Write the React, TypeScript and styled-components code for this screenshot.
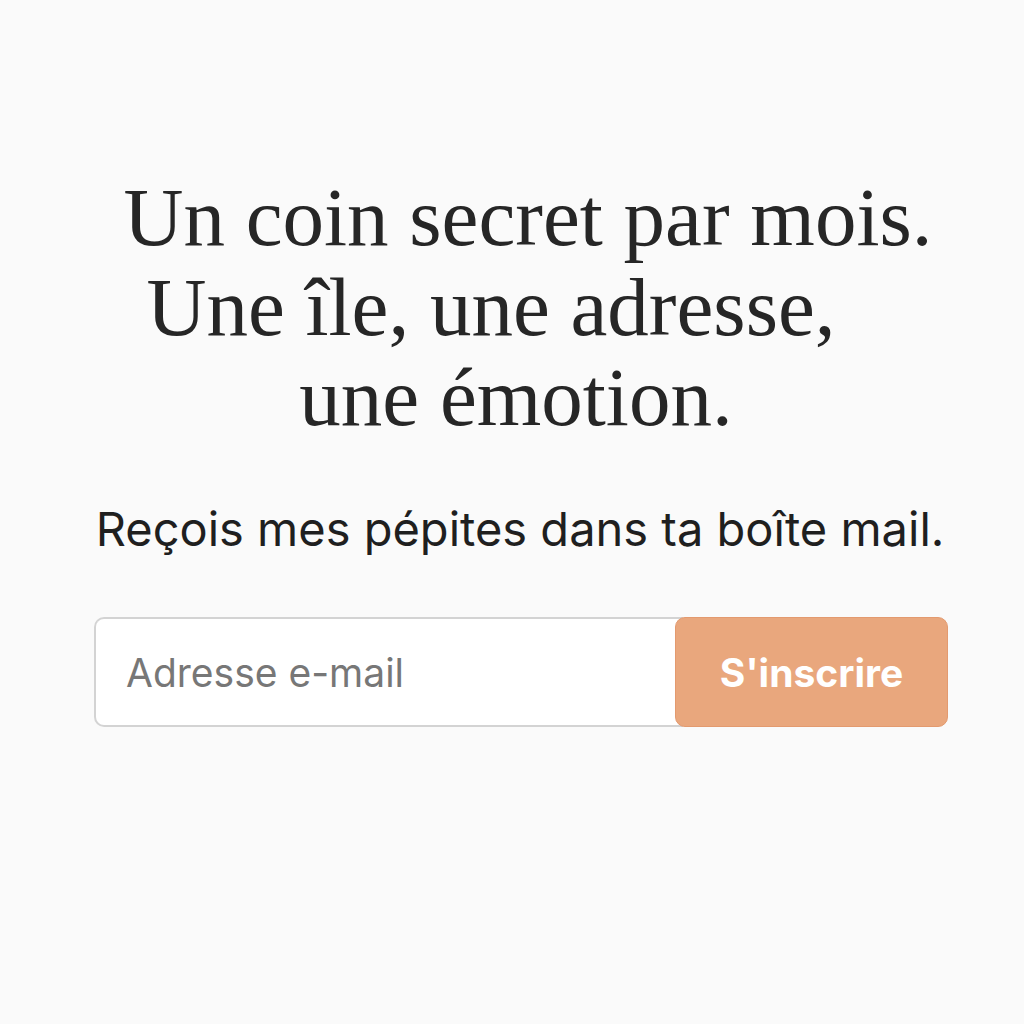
import React from "react";
import styled, { createGlobalStyle } from "styled-components";

const Global = createGlobalStyle`
  html, body { margin: 0; padding: 0; background: #fafafa; }
  body { font-family: Inter, "Liberation Sans", sans-serif; }
`;

const Page = styled.main`
  width: 1024px;
  height: 1024px;
  display: flex;
  flex-direction: column;
  align-items: center;
  padding-top: 172px;
  box-sizing: border-box;
`;

const Title = styled.h1`
  margin: 0;
  font-family: "Liberation Serif", "DejaVu Serif", serif;
  font-weight: 400;
  font-size: 83px;
  line-height: 90px;
  color: #262626;
  display: flex;
  flex-direction: column;
  align-items: center;
`;

const Line = styled.span<{ $shift: number }>`
  display: block;
  white-space: nowrap;
  margin-left: ${(p) => p.$shift}px;
`;

const Subtitle = styled.p`
  margin: 59px 0 0;
  font-family: Inter, "Liberation Sans", sans-serif;
  font-size: 47px;
  line-height: 56px;
  color: #1f1f1f;
  margin-left: 16px;
`;

const Form = styled.form`
  margin-top: 60px;
  width: 854px;
  height: 110px;
  display: flex;
  margin-left: 18px;
`;

const Input = styled.input`
  flex: 1;
  min-width: 0;
  height: 100%;
  box-sizing: border-box;
  border: 2px solid #d3d3d3;
  border-right: none;
  border-radius: 10px 0 0 10px;
  background: #fff;
  padding: 0 0 0 30px;
  font-family: Inter, "Liberation Sans", sans-serif;
  font-size: 39px;
  color: #333;
  outline: none;
  &::placeholder { color: #777; }
`;

const Button = styled.button`
  width: 273px;
  height: 100%;
  border: 1px solid #e39a6f;
  border-radius: 10px;
  margin-left: -8px;
  background: #e9a77d;
  color: #fff;
  font-family: Inter, "Liberation Sans", sans-serif;
  font-weight: 700;
  font-size: 39px;
  cursor: pointer;
`;

export default function App() {
  return (
    <>
      <Global />
      <Page>
        <Title>
          <Line $shift={32}>Un coin secret par mois.</Line>
          <Line $shift={-42}>Une île, une adresse,</Line>
          <Line $shift={8}>une émotion.</Line>
        </Title>
        <Subtitle>Reçois mes pépites dans ta boîte mail.</Subtitle>
        <Form onSubmit={(e) => e.preventDefault()}>
          <Input type="email" placeholder="Adresse e-mail" />
          <Button type="submit">S'inscrire</Button>
        </Form>
      </Page>
    </>
  );
}
